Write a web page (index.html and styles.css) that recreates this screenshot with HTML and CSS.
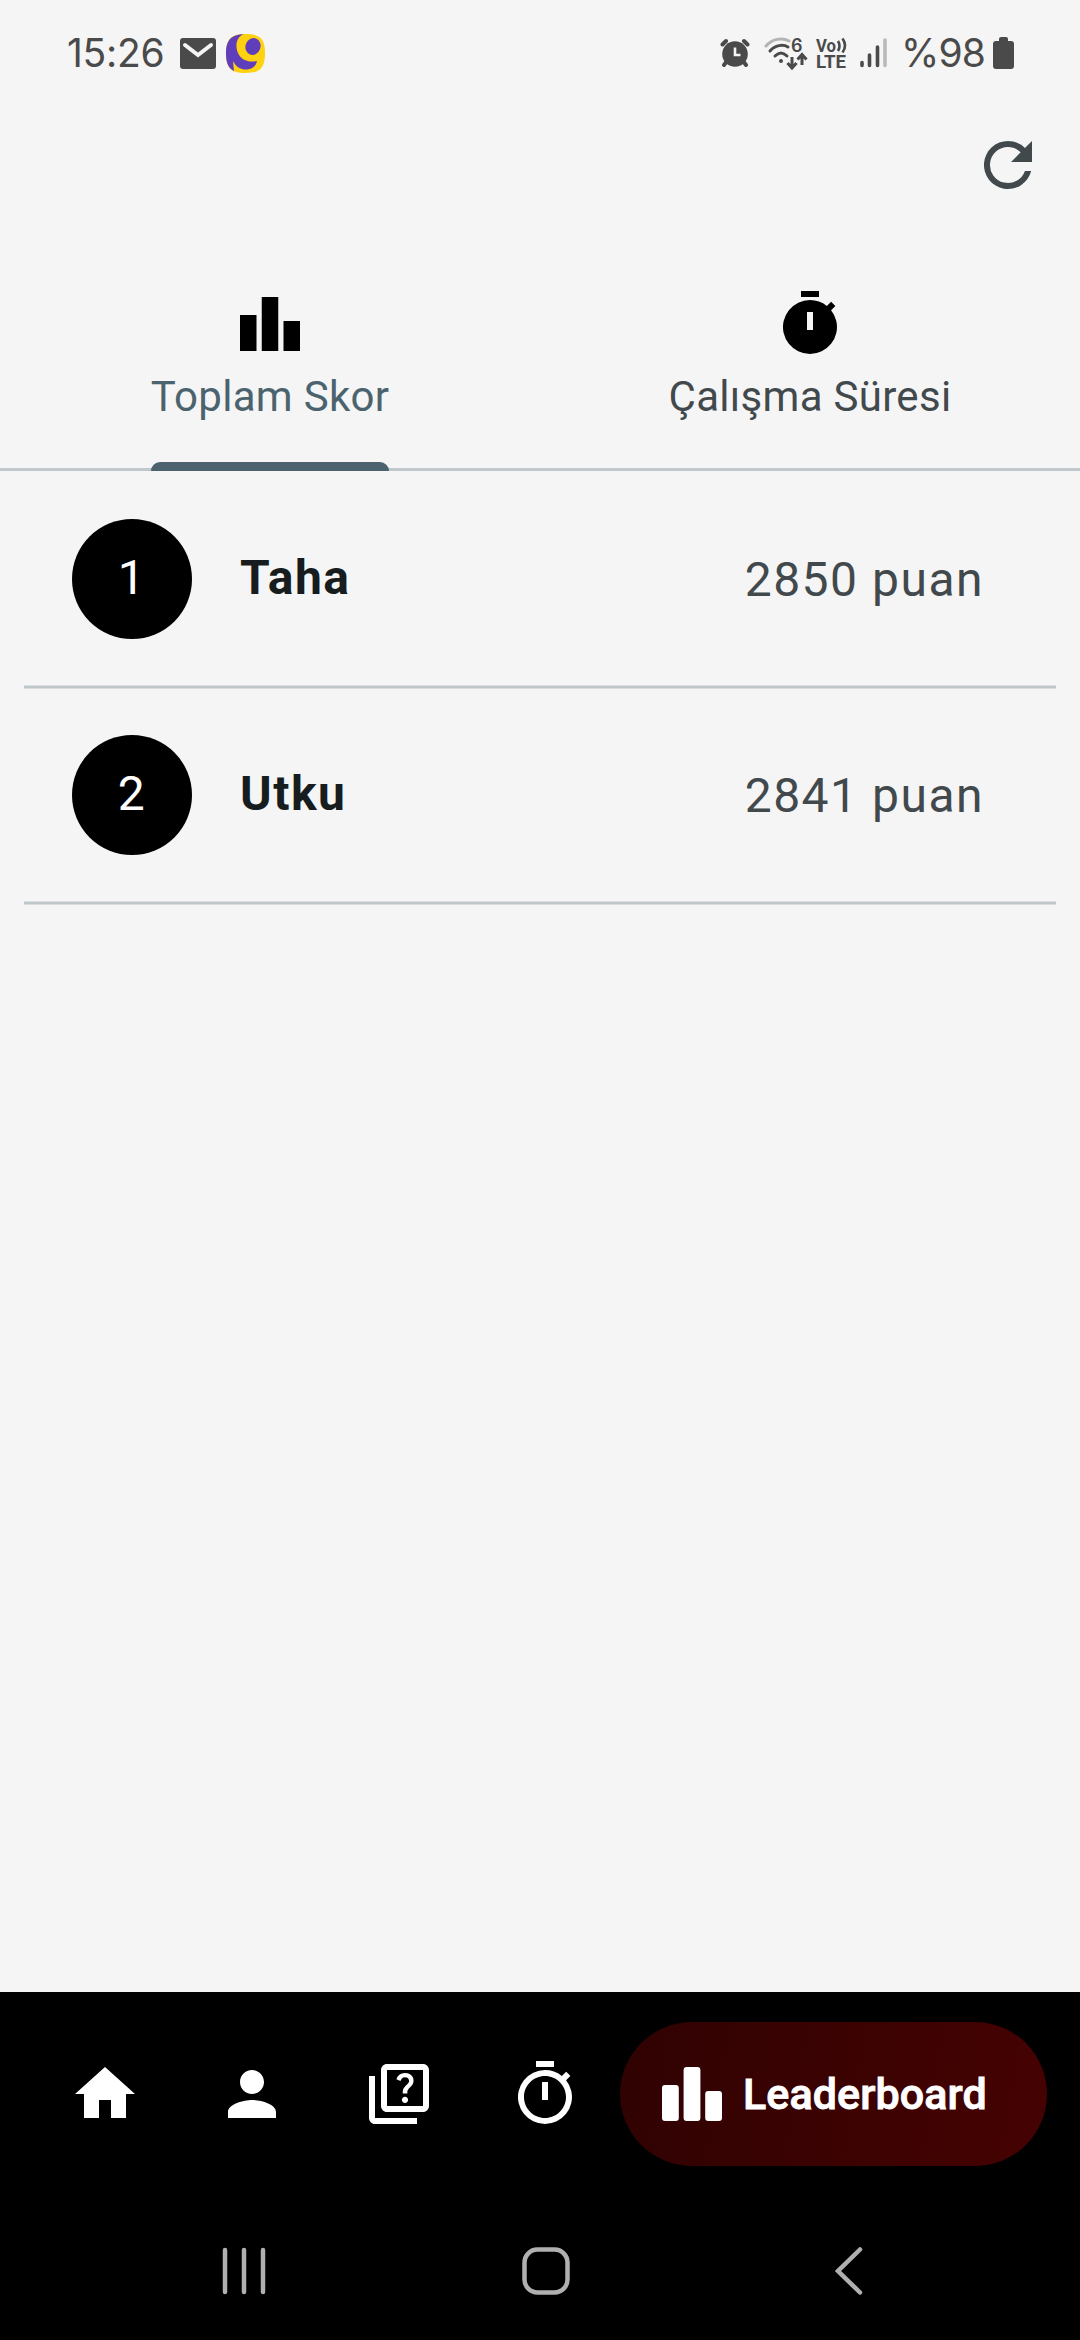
FILE: index.html
```html
<!DOCTYPE html>
<html lang="tr">
<head>
<meta charset="utf-8">
<title>Leaderboard</title>
<link rel="stylesheet" href="styles.css">
</head>
<body>
<div class="screen">
  <header class="status">
    <span class="clock">15:26</span>
    <svg class="mail" width="36" height="31" viewBox="0 0 36 31"><rect width="36" height="31" rx="3" fill="#4a4a4a"/><path d="M5 7l13 10L31 7" fill="none" stroke="#f5f5f5" stroke-width="4" stroke-linecap="round"/></svg>
    <svg class="app" width="39" height="39" viewBox="0 0 39 39"><path d="M19.500 0C34 0 39 5 39 19.500S34 39 19.500 39 0 34 0 19.500 5 0 19.500 0z" fill="#ffd20f"/><path d="M18 0C10 3 9 12 12 19c3 7 11 10 19 8-1 6-7 10-15 8-4-1-7-4-9-8l1 10C2 34 0 28 0 19.500 0 6 5 1 18 0z" fill="#5f3dbb"/><ellipse cx="27" cy="12.500" rx="7.500" ry="8.500" transform="rotate(20 27 12.500)" fill="#5f3dbb"/></svg>
    <span class="spacer"></span>
    <svg class="alarm" width="30" height="30" viewBox="0 0 30 30"><g fill="none" stroke="#4a4a4a" stroke-width="4" stroke-linecap="round"><path d="M2.500 6.500L6 3M27.500 6.500L24 3M4 27l3-4M26 27l-3-4"/></g><circle cx="15" cy="16" r="12.800" fill="#4a4a4a"/><path d="M15 9.500V17h5.500" fill="none" stroke="#f5f5f5" stroke-width="2.600"/></svg>
    <svg class="wifi" width="44" height="49" viewBox="0 -8 44 49"><g fill="none" stroke-width="3" stroke-linecap="round"><path d="M2 9C8 2 18 0 25 4" stroke="#b4b4b4"/><path d="M6 14c5-6 13-7 18-4M11 19c4-4 8-4 12 0" stroke="#4a4a4a"/></g><circle cx="17" cy="24" r="2" fill="#4a4a4a"/><text x="27" y="15" class="wifi-gen">6</text><path d="M28 20v10M23.500 26l4.500 5 4.500-5M38 28V18M33.500 22.500l4.500-5 4.500 5" fill="none" stroke="#4a4a4a" stroke-width="3"/></svg>
    <svg class="volte" width="32" height="49" viewBox="0 -8 32 49"><text x="0" y="14.500" textLength="20" lengthAdjust="spacingAndGlyphs">Vo</text><text x="0" y="31" textLength="30" lengthAdjust="spacingAndGlyphs">LTE</text><path d="M22 4q3 5 0 10M26.500 1.500q5 7 0 14" fill="none" stroke="#4a4a4a" stroke-width="2.600"/></svg>
    <svg class="signal" width="28" height="30" viewBox="0 0 28 30"><g stroke-width="3.600" stroke-linecap="round" stroke="#4a4a4a"><path d="M2 24.500v3M9.500 17v10.500M17.500 9v18.500"/><path d="M25 2v25.500" stroke="#b9b9b9"/></g></svg>
    <span class="percent">%98</span>
    <svg class="battery" width="21" height="32" viewBox="0 0 21 32"><path d="M6 4V2q0-2 2-2h5q2 0 2 2v2h3q3 0 3 3v22q0 3-3 3H3q-3 0-3-3V7q0-3 3-3z" fill="#4a4a4a"/></svg>
  </header>

  <div class="toolbar">
    <svg class="icon" viewBox="0 0 24 24" fill="#42494d"><path d="M17.650 6.350A7.958 7.958 0 0 0 12 4a8 8 0 1 0 7.730 10h-2.080A6 6 0 1 1 12 6c1.660 0 3.140.690 4.220 1.780L13 11h7V4z"/></svg>
  </div>

  <nav class="tabs">
    <div class="tab active">
      <svg class="icon" viewBox="0 0 24 24"><path d="M7.500 21H2V9h5.500zM14.750 3h-5.500v18h5.500zM22 11h-5.500v10H22z"/></svg>
      <span class="label">Toplam Skor</span>
    </div>
    <div class="tab">
      <svg class="icon" viewBox="0 0 24 24"><path fill-rule="evenodd" d="M9 1h6v2H9zM12 4a9 9 0 0 1 5.620 1.980l1.420-1.420L20.450 5.970 19.030 7.390A9 9 0 1 1 12 4zM11 8v6h2V8z"/></svg>
      <span class="label">Çalışma Süresi</span>
    </div>
  </nav>

  <main class="list">
    <div class="row"><span class="rank">1</span><span class="name">Taha</span><span class="score">2850 puan</span></div>
    <div class="row"><span class="rank">2</span><span class="name">Utku</span><span class="score">2841 puan</span></div>
  </main>

  <nav class="bottom">
    <svg class="icon" viewBox="0 0 24 24"><path d="M10 20v-6h4v6h5v-8h3L12 3 2 12h3v8z"/></svg>
    <svg class="icon" viewBox="0 0 24 24"><path d="M12 12c2.210 0 4-1.790 4-4s-1.790-4-4-4-4 1.790-4 4 1.790 4 4 4zm0 2c-2.670 0-8 1.340-8 4v2h16v-2c0-2.660-5.330-4-8-4z"/></svg>
    <svg class="icon" viewBox="0 0 24 24"><path d="M4 6H2v14c0 1.100.900 2 2 2h14v-2H4V6zm16-4H8c-1.100 0-2 .900-2 2v12c0 1.100.900 2 2 2h12c1.100 0 2-.900 2-2V4c0-1.100-.900-2-2-2zm0 14H8V4h12v12zm-6.490-5.840c.410-.730 1.180-1.160 1.630-1.800.480-.680.210-1.940-1.140-1.940-.880 0-1.320.670-1.500 1.230l-1.370-.570C11.510 5.960 12.520 5 13.990 5c1.230 0 2.080.560 2.510 1.260.370.600.580 1.730.010 2.570-.630.930-1.230 1.210-1.560 1.810-.130.240-.180.400-.180 1.180h-1.520c.010-.410-.060-1.080.260-1.660zm-.560 3.790c0-.590.470-1.040 1.050-1.040.590 0 1.040.450 1.040 1.040 0 .580-.440 1.050-1.040 1.050-.580 0-1.050-.470-1.050-1.050z"/></svg>
    <svg class="icon" viewBox="0 0 24 24"><path d="M15 1H9v2h6V1zm-4 13h2V8h-2v6zm8.030-6.610l1.420-1.420c-.430-.510-.900-.990-1.410-1.410l-1.420 1.420A8.962 8.962 0 0 0 12 4a9 9 0 1 0 7.030 3.390zM12 20c-3.870 0-7-3.130-7-7s3.130-7 7-7 7 3.130 7 7-3.130 7-7 7z"/></svg>
    <div class="pill">
      <svg class="icon" viewBox="0 0 24 24"><rect x="2" y="9" width="5.600" height="12" rx="1"/><rect x="9.200" y="3" width="5.600" height="18" rx="1"/><rect x="16.400" y="11" width="5.600" height="10" rx="1"/></svg>
      <span>Leaderboard</span>
    </div>
  </nav>

  <footer class="system">
    <svg width="44" height="48" viewBox="0 0 44 48"><path d="M3 3v42M22 3v42M41 3v42"/></svg>
    <svg class="home" width="48" height="48" viewBox="0 0 48 48"><rect x="2.500" y="2.500" width="43" height="43" rx="13"/></svg>
    <svg width="28" height="48" viewBox="0 0 28 48"><path d="M25 2.500L3 24l22 21.500"/></svg>
  </footer>
</div>
</body>
</html>
```

FILE: styles.css
```css
* { box-sizing: border-box; }
body { margin: 0; background: #f5f5f5; font-family: Roboto, "Noto Sans", sans-serif; }
svg { display: block; flex: none; }
.screen { width: 1080px; height: 2340px; display: flex; flex-direction: column; }
.icon { width: 72px; height: 72px; }

.status { height: 106px; padding: 0 66px 0 67px; display: flex; align-items: center; color: #4a4a4a; }
.clock, .percent { font-family: Inter, sans-serif; font-size: 39px; line-height: 46px; font-weight: 400; white-space: nowrap; }
.clock { width: 98px; letter-spacing: -0.3px; }
.mail { margin-left: 15px; }
.app { margin-left: 10px; }
.spacer { flex: 1; }
.alarm { margin-right: 14px; }
.wifi { margin-right: 8px; }
.volte { margin-right: 12px; }
.signal { margin-right: 13px; }
.percent { width: 85px; margin-right: 7px; letter-spacing: -0.9px; }
.wifi-gen { font: 600 18px Inter, sans-serif; fill: #4a4a4a; }
.volte text { font: 700 17.5px Roboto, sans-serif; fill: #4a4a4a; }

.toolbar { height: 152px; padding: 23px 36px 0; display: flex; justify-content: flex-end; }

.tabs { height: 213px; display: flex; border-bottom: 3px solid #c0c7cd; }
.tab { flex: 1; height: 213px; padding-top: 30px; display: flex; flex-direction: column; align-items: center; color: #42494d; }
.label { flex: 1; padding-top: 7px; font-size: 42px; line-height: 60px; letter-spacing: 0.3px; white-space: nowrap; }
.active { color: #4b636e; }
.active::after { content: ""; width: 238px; height: 9px; border-radius: 9px 9px 0 0; background: #4b636e; }

.list { flex: 1; padding: 2px 24px 0; }
.row { height: 216px; padding: 0 72px 4px 48px; display: flex; align-items: center; background: linear-gradient(#dadee1 1px, #c0c7cb 1px, #c0c7cb 3px, #dadee1 3px) bottom / 100% 4px no-repeat; font-size: 48px; letter-spacing: 1.5px; }
.rank { width: 120px; height: 120px; border-radius: 50%; background: #000; color: #fff; text-align: center; line-height: 118px; }
.name { margin-left: 48px; flex: 1; font-weight: 700; color: #171d1f; line-height: 60px; padding-bottom: 2px; }
.score { color: #42494c; line-height: 60px; padding-top: 2px; }

.bottom { height: 204px; background: #000; padding: 30px 33px 30px 69px; display: flex; align-items: center; fill: #fff; }
.bottom > .icon { margin-right: 74.800px; }
.bottom > .icon:nth-child(4) { margin-right: 38.600px; }
.pill { width: 427px; height: 144px; border-radius: 72px; padding-left: 36px; display: flex; align-items: center; gap: 15px; background: linear-gradient(100deg, #300202, #460202); color: #fff; font-size: 43px; font-weight: 500; -webkit-text-stroke: 0.9px #fff; letter-spacing: 0.1px; white-space: nowrap; }

.system { height: 144px; background: #000; padding: 6px 0 0 222px; display: flex; align-items: center; fill: none; stroke: #b0b0b0; stroke-width: 4.500px; stroke-linecap: round; }
.home { margin: 0 265px 0 256px; }
```
